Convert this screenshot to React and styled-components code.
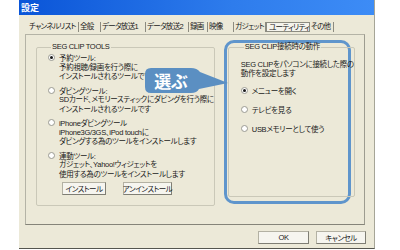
import styled, { createGlobalStyle } from 'styled-components'

const GlobalStyle = createGlobalStyle`
  html, body {
    margin: 0;
    padding: 0;
    background: #ffffff;
  }
  body {
    font-family: "Liberation Sans", "Noto Sans CJK JP", sans-serif;
    font-feature-settings: "palt" 1;
  }
`;

const tabs = [
  { label: 'チャンネルリスト', width: 51 },
  { label: '全般', width: 22 },
  { label: 'データ放送1', width: 45 },
  { label: 'データ放送2', width: 43 },
  { label: '録画', width: 19 },
  { label: '映像', width: 26 },
  { label: 'ガジェット', width: 32 },
  { label: 'ユーティリティ', width: 44, active: true },
  { label: 'その他', width: 24 },
];

const tools = [
  { title: '予約ツール:', lines: ['予約視聴/録画を行う際に', 'インストールされるツールです'], checked: true },
  { title: 'ダビングツール:', lines: ['SDカード、メモリースティックにダビングを行う際に', 'インストールされるツールです'] },
  { title: 'iPhoneダビングツール', lines: ['iPhone3G/3GS、iPod touchに', 'ダビングする為のツールをインストールします'] },
  { title: '連動ツール:', lines: ['ガジェット、Yahoo!ウィジェットを', '使用する為のツールをインストールします'] },
];

const actions = [
  { label: 'メニューを開く', checked: true },
  { label: 'テレビを見る' },
  { label: 'USBメモリーとして使う' },
];

function App() {
  return (
    <>
      <GlobalStyle />
      <Dialog>
        <TitleBar>設定</TitleBar>
        <Body>
          <TabStrip>
            {tabs.map((t) => (
              <Tab key={t.label} $w={t.width} $active={t.active}>{t.label}</Tab>
            ))}
          </TabStrip>
          <Panel>
            <Columns>
              <ToolsGroup>
                <Legend>SEG CLIP TOOLS</Legend>
                <ToolList>
                  {tools.map((tool) => (
                    <ToolItem key={tool.title}>
                      <RadioRow>
                        <Radio $checked={tool.checked} />
                        <span>{tool.title}</span>
                      </RadioRow>
                      {tool.lines.map((l) => (
                        <Desc key={l}>{l}</Desc>
                      ))}
                    </ToolItem>
                  ))}
                </ToolList>
                <ButtonRow>
                  <Button $w={44}>インストール</Button>
                  <Button $w={49}>アンインストール</Button>
                </ButtonRow>
              </ToolsGroup>
              <Highlight>
                <ConnectGroup>
                  <Legend>SEG CLIP接続時の動作</Legend>
                  <Note>
                    <div>SEG CLIPをパソコンに接続した際の</div>
                    <div>動作を設定します</div>
                  </Note>
                  <ActionList>
                    {actions.map((a) => (
                      <RadioRow key={a.label}>
                        <Radio $checked={a.checked} />
                        <span>{a.label}</span>
                      </RadioRow>
                    ))}
                  </ActionList>
                </ConnectGroup>
              </Highlight>
            </Columns>
            <Callout>
              <svg width="84" height="27" viewBox="0 0 84 27">
                <path
                  d="M6 0 H46 Q52 0 55 4 L83 15 L54 21 Q52 25 46 25 H6 Q0 25 0 19 V6 Q0 0 6 0 Z"
                  fill="#5b8fc2"
                />
              </svg>
              <CalloutText>選ぶ</CalloutText>
            </Callout>
          </Panel>
          <Footer>
            <Button $w={51}>OK</Button>
            <Button $w={50}>キャンセル</Button>
          </Footer>
        </Body>
      </Dialog>
    </>
  );
}

export default App;

const Dialog = styled.div`
  margin-left: 19px;
  width: 355px;
  height: 248px;
  background: #ece9d8;
  border-right: 1px solid #a6a597;
  border-bottom: 1px solid #55554f;
  display: flex;
  flex-direction: column;
  font-size: 7.5px;
  letter-spacing: -0.3px;
  color: #1a1a1a;
`;

const TitleBar = styled.div`
  height: 15px;
  background: linear-gradient(to right, #0a55d8, #2e7cec 60%, #3d8cf6);
  color: #ffffff;
  font-weight: bold;
  font-size: 9px;
  letter-spacing: 0;
  line-height: 16px;
  padding-left: 2px;
`;

const Body = styled.div`
  padding: 5px 8px 0 6px;
  display: flex;
  flex-direction: column;
`;

const TabStrip = styled.div`
  display: flex;
  height: 14px;
  padding-left: 3px;
  align-items: center;
  letter-spacing: -0.7px;
`;

const Tab = styled.div`
  width: ${(p) => p.$w}px;
  box-sizing: border-box;
  height: 10px;
  line-height: 10px;
  padding-left: 1px;
  white-space: nowrap;
  overflow: hidden;
  border-right: 1px solid #8c8b80;
  ${(p) => p.$active && `
    border: 1px solid #8c8b80;
    background: #f4f3ec;
    padding-left: 2px;
  `}
`;

const Panel = styled.div`
  position: relative;
  width: 340px;
  height: 191px;
  box-sizing: border-box;
  border: 1px solid #b4b3a6;
  border-bottom-color: #858479;
  border-right-color: #9d9c90;
  padding: 8px 0 0 10px;
`;

const Columns = styled.div`
  display: flex;
  gap: 9px;
  align-items: flex-start;
`;

const ToolsGroup = styled.fieldset`
  margin: 0;
  width: 169px;
  height: 163px;
  box-sizing: border-box;
  border: 1px solid #cac8b8;
  border-radius: 2px;
  padding: 2px 0 0 11px;
`;

const Legend = styled.legend`
  padding: 0 1px;
  margin-left: 3px;
  line-height: 8px;
  white-space: nowrap;
`;

const ToolList = styled.div`
  display: flex;
  flex-direction: column;
  gap: 4px;
`;

const ToolItem = styled.div`
  display: flex;
  flex-direction: column;
`;

const RadioRow = styled.div`
  display: flex;
  align-items: center;
  gap: 4px;
  height: 9.5px;
  white-space: nowrap;
`;

const Radio = styled.span`
  width: 7px;
  height: 7px;
  box-sizing: border-box;
  border-radius: 50%;
  border: 1px solid #9a9a92;
  background: #ffffff;
  flex: none;
  display: flex;
  align-items: center;
  justify-content: center;
  &::after {
    content: '';
    width: 3px;
    height: 3px;
    border-radius: 50%;
    background: ${(p) => (p.$checked ? '#1a1a1a' : 'transparent')};
  }
`;

const Desc = styled.div`
  padding-left: 11px;
  line-height: 9.5px;
  white-space: nowrap;
`;

const ButtonRow = styled.div`
  display: flex;
  gap: 17px;
  margin: 3px 0 0 14px;
`;

const Button = styled.div`
  width: ${(p) => p.$w}px;
  height: 13px;
  box-sizing: border-box;
  border: 1px solid #b3b1a3;
  border-right-color: #7f7e74;
  border-bottom-color: #7f7e74;
  background: #f6f5ef;
  display: flex;
  align-items: center;
  justify-content: center;
  white-space: nowrap;
  letter-spacing: -0.5px;
`;

const Highlight = styled.div`
  width: 127px;
  height: 164px;
  box-sizing: border-box;
  border: 3px solid #5f95cc;
  border-radius: 10px;
  margin-top: -3px;
  padding: 0 2px 4px 1px;
  display: flex;
`;

const ConnectGroup = styled.fieldset`
  margin: 0;
  flex: 1;
  border: 1px solid #cac8b8;
  border-radius: 2px;
  padding: 9px 0 0 12px;
`;

const Note = styled.div`
  line-height: 9px;
  white-space: nowrap;
`;

const ActionList = styled.div`
  display: flex;
  flex-direction: column;
  gap: 9.5px;
  margin-top: 8px;
`;

const Callout = styled.div`
  position: absolute;
  left: 119px;
  top: 33px;
  width: 84px;
  height: 27px;
`;

const CalloutText = styled.span`
  position: absolute;
  left: 5px;
  top: 0;
  width: 42px;
  height: 25px;
  display: flex;
  align-items: center;
  justify-content: center;
  color: #ffffff;
  font-weight: bold;
  font-size: 17px;
  letter-spacing: 0;
  font-family: "Noto Sans CJK JP", sans-serif;
`;

const Footer = styled.div`
  display: flex;
  justify-content: flex-end;
  gap: 7px;
  margin-top: 6px;
`;
